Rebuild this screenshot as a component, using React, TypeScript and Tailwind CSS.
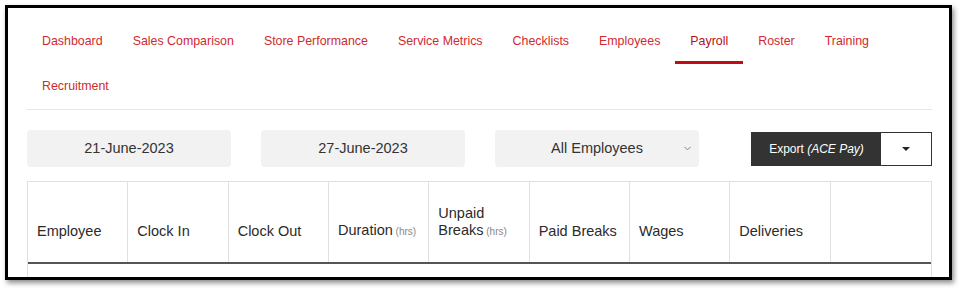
import { ChevronDown } from 'lucide-react';

const navItems = [
  'Dashboard',
  'Sales Comparison',
  'Store Performance',
  'Service Metrics',
  'Checklists',
  'Employees',
  'Payroll',
  'Roster',
  'Training',
  'Recruitment',
];

const columns: { label: string; unit?: string }[] = [
  { label: 'Employee' },
  { label: 'Clock In' },
  { label: 'Clock Out' },
  { label: 'Duration', unit: '(hrs)' },
  { label: 'Unpaid Breaks', unit: '(hrs)' },
  { label: 'Paid Breaks' },
  { label: 'Wages' },
  { label: 'Deliveries' },
  { label: '' },
];

export default function App() {
  return (
    <div className="w-[962px] h-[290px] bg-white p-[5px] font-['Liberation_Sans',Arial,sans-serif]">
      <div className="w-[947px] h-[275px] border-[3px] border-black bg-white overflow-hidden shadow-[2px_3px_5px_rgba(0,0,0,0.45)]">
        <div className="ml-[19px] w-[905px]">
          <nav className="pt-[11px] flex flex-wrap border-b border-[#e6e6e6]">
            {navItems.map((item) => {
              const active = item === 'Payroll';
              return (
                <div
                  key={item}
                  className={`relative h-[45px] px-[15px] flex items-center text-[12.4px] ${
                    active ? 'text-[#b50f18]' : 'text-[#cf2a2f]'
                  }`}
                >
                  {item}
                  {active && <span className="absolute left-0 right-0 bottom-0 h-[3px] bg-[#c00d14]" />}
                </div>
              );
            })}
          </nav>

          <div className="mt-[20px] flex items-center">
            <div className="w-[204px] h-[37px] rounded-[4px] bg-[#f2f2f2] flex items-center justify-center text-[14.5px] text-[#333]">
              21-June-2023
            </div>
            <div className="ml-[30px] w-[204px] h-[37px] rounded-[4px] bg-[#f2f2f2] flex items-center justify-center text-[14.5px] text-[#333]">
              27-June-2023
            </div>
            <div className="ml-[30px] w-[204px] h-[37px] rounded-[4px] bg-[#f2f2f2] relative flex items-center justify-center text-[14.5px] text-[#333]">
              All Employees
              <ChevronDown className="absolute right-[6px] top-[13px] text-[#666]" size={11} strokeWidth={1.75} />
            </div>
            <div className="ml-auto w-[181px] h-[34px] flex border border-[#333]">
              <div className="w-[129px] bg-[#333] text-white text-[12px] flex items-center justify-center">
                Export&nbsp;<span className="italic">(ACE Pay)</span>
              </div>
              <div className="flex-1 bg-white flex items-center justify-center">
                <span className="w-0 h-0 border-l-[4px] border-r-[4px] border-t-[4px] border-l-transparent border-r-transparent border-t-[#222]" />
              </div>
            </div>
          </div>

          <div className="mt-[14px] border-x border-t border-[#e0e0e0]">
            <div className="grid grid-cols-9 h-[82px] border-b-2 border-[#555]">
              {columns.map((col, i) => (
                <div
                  key={i}
                  className={`flex items-end pl-[9px] pr-2 pb-[22px] text-[14.5px] leading-[17px] text-[#2b2b2b] ${
                    i < columns.length - 1 ? 'border-r border-[#e0e0e0]' : ''
                  }`}
                >
                  <span>
                    {col.label}
                    {col.unit && <span className="text-[10px] text-[#888]"> {col.unit}</span>}
                  </span>
                </div>
              ))}
            </div>
            <div className="h-[20px]" />
          </div>
        </div>
      </div>
    </div>
  );
}
